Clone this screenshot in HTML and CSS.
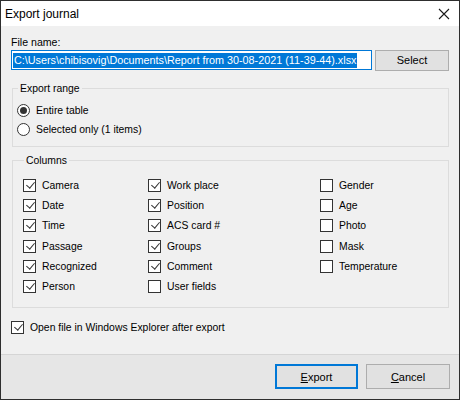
FILE: index.html
```html
<!DOCTYPE html>
<html>
<head>
<meta charset="utf-8">
<link rel="stylesheet" href="styles.css">
</head>
<body>
<div class="window">
  <div class="titlebar">
    <span class="title">Export journal</span>
    <svg class="close" width="12" height="12" viewBox="0 0 12 12"><path d="M1 1 L11 11 M11 1 L1 11" stroke="#1a1a1a" stroke-width="1.1" fill="none"/></svg>
  </div>
  <div class="content">
    <div class="field-label">File name:</div>
    <div class="file-row">
      <div class="textbox"><span class="sel">C:\Users\chibisovig\Documents\Report from 30-08-2021 (11-39-44).xlsx</span></div>
      <div class="btn select-btn">Select</div>
    </div>
    <fieldset class="group range">
      <legend>Export range</legend>
      <div class="radio-row">
        <svg class="radio" width="13" height="13" viewBox="0 0 13 13"><circle cx="6.5" cy="6.5" r="6" fill="#fff" stroke="#333" stroke-width="1"/><circle cx="6.5" cy="6.5" r="3.5" fill="#333"/></svg>
        <span>Entire table</span>
      </div>
      <div class="radio-row">
        <svg class="radio" width="13" height="13" viewBox="0 0 13 13"><circle cx="6.5" cy="6.5" r="6" fill="#fff" stroke="#333" stroke-width="1"/></svg>
        <span>Selected only (1 items)</span>
      </div>
    </fieldset>
    <fieldset class="group columns">
      <legend>Columns</legend>
      <div class="col-grid">
        <div class="cb-row"><span class="cb on"></span><span>Camera</span></div>
        <div class="cb-row"><span class="cb on"></span><span>Date</span></div>
        <div class="cb-row"><span class="cb on"></span><span>Time</span></div>
        <div class="cb-row"><span class="cb on"></span><span>Passage</span></div>
        <div class="cb-row"><span class="cb on"></span><span>Recognized</span></div>
        <div class="cb-row"><span class="cb on"></span><span>Person</span></div>
        <div class="cb-row"><span class="cb on"></span><span>Work place</span></div>
        <div class="cb-row"><span class="cb on"></span><span>Position</span></div>
        <div class="cb-row"><span class="cb on"></span><span>ACS card #</span></div>
        <div class="cb-row"><span class="cb on"></span><span>Groups</span></div>
        <div class="cb-row"><span class="cb on"></span><span>Comment</span></div>
        <div class="cb-row"><span class="cb"></span><span>User fields</span></div>
        <div class="cb-row"><span class="cb"></span><span>Gender</span></div>
        <div class="cb-row"><span class="cb"></span><span>Age</span></div>
        <div class="cb-row"><span class="cb"></span><span>Photo</span></div>
        <div class="cb-row"><span class="cb"></span><span>Mask</span></div>
        <div class="cb-row"><span class="cb"></span><span>Temperature</span></div>
      </div>
    </fieldset>
    <div class="cb-row open-row"><span class="cb on"></span><span>Open file in Windows Explorer after export</span></div>
  </div>
  <div class="footer">
    <div class="btn footer-btn default"><u>E</u>xport</div>
    <div class="btn footer-btn"><u>C</u>ancel</div>
  </div>
</div>
</body>
</html>
```
FILE: styles.css
```css
* { box-sizing: border-box; }
html, body { margin: 0; padding: 0; }
body {
  width: 460px;
  height: 400px;
  overflow: hidden;
  font-family: "Liberation Sans", Arial, sans-serif;
  font-size: 10.4px;
  color: #000;
  background: #f0f0f0;
}
.window {
  width: 460px;
  height: 400px;
  border: 1px solid #2e2e2e;
  background: #f0f0f0;
  display: flex;
  flex-direction: column;
}
.titlebar {
  height: 25px;
  background: #fff;
  display: flex;
  align-items: center;
  justify-content: space-between;
  padding: 0 9px 0 4px;
  flex: none;
}
.title {
  font-size: 12px;
  line-height: 14px;
  color: #000;
  margin-top: 1px;
}
.close { display: block; margin-top: 1px; }
.content {
  padding: 10px 10px 0 10px;
  flex: 1;
}
.field-label {
  line-height: 13px;
  height: 13px;
  font-size: 10.6px;
}
.file-row {
  display: flex;
  align-items: center;
  gap: 3px;
  height: 22px;
}
.textbox {
  width: 361px;
  height: 20px;
  border: 1px solid #0078d7;
  background: #fff;
  padding: 1px 0 0 1px;
  display: flex;
  align-items: center;
  white-space: nowrap;
  overflow: hidden;
}
.sel {
  background: #0078d7;
  color: #fff;
  line-height: 15px;
  padding: 0 1px;
  font-size: 10.8px;
}
.btn {
  background: #e1e1e1;
  border: 1px solid #adadad;
  display: flex;
  align-items: center;
  justify-content: center;
  font-size: 11px;
}
.select-btn {
  width: 74px;
  height: 21px;
}
.group {
  margin: 0 0 0 1px;
  border: 1px solid #dcdcdc;
  min-width: 0;
}
.group legend {
  line-height: 13px;
  padding: 0 2px;
  margin-left: 1px;
  font-size: 10.4px;
}
.range {
  margin-top: 11px;
  padding: 9px 4px 10px 4px;
  display: flex;
  flex-direction: column;
  gap: 6px;
}
.radio-row {
  display: flex;
  align-items: center;
  height: 13px;
  gap: 6px;
}
.radio { display: block; flex: none; }
.columns {
  margin-top: 7px;
  padding: 12px 4px 14px 10px;
}
.col-grid {
  display: grid;
  grid-template-columns: 125px 172px 1fr;
  grid-template-rows: repeat(6, 13px);
  grid-auto-flow: column;
  row-gap: 7.2px;
}
.cb-row {
  display: flex;
  align-items: center;
  height: 13px;
  gap: 6px;
  white-space: nowrap;
}
.cb {
  width: 13px;
  height: 13px;
  border: 1px solid #333;
  background: #fff;
  flex: none;
  position: relative;
}
.cb.on::after {
  content: "";
  position: absolute;
  left: 4px;
  top: 0px;
  width: 4px;
  height: 7px;
  border-right: 1px solid #333;
  border-bottom: 1px solid #333;
  transform: rotate(40deg);
}
.open-row {
  margin-top: 13px;
}
.footer {
  flex: none;
  height: 45px;
  border-top: 1px solid #d5d5d5;
  background: #e6e6e6;
  display: flex;
  justify-content: flex-end;
  align-items: flex-start;
  gap: 8px;
  padding: 9px 9px 0 0;
}
.footer-btn {
  width: 83px;
  height: 25px;
}
.footer-btn + .footer-btn { width: 84px; }
.footer-btn.default {
  border: 2px solid #0078d7;
}
```
